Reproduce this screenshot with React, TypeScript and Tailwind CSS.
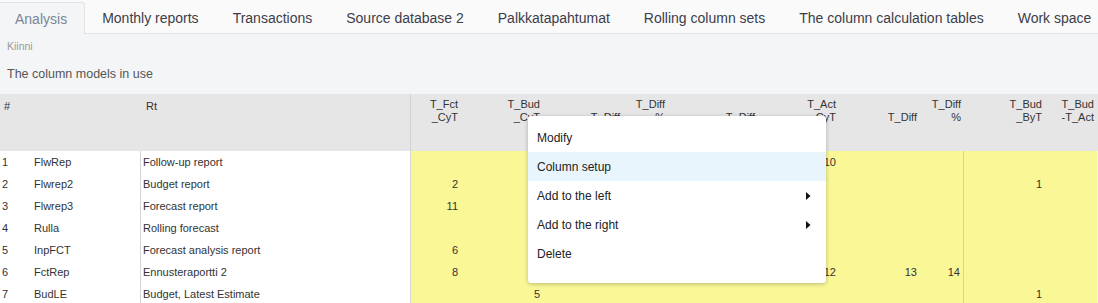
import React from "react";

const tabs = [
  "Analysis",
  "Monthly reports",
  "Transactions",
  "Source database 2",
  "Palkkatapahtumat",
  "Rolling column sets",
  "The column calculation tables",
  "Work space",
];

interface Col {
  w: string;
  l1: string;
  l2: string;
  border?: boolean;
}

const cols: Col[] = [
  { w: "w-[50px]", l1: "T_Fct", l2: "_CyT" },
  { w: "w-[82px]", l1: "T_Bud", l2: "_CyT" },
  { w: "w-[80px]", l1: "", l2: "T_Diff" },
  { w: "w-[45px]", l1: "T_Diff", l2: "%" },
  { w: "w-[90px]", l1: "", l2: "T_Diff" },
  { w: "w-[81px]", l1: "T_Act", l2: "_CyT" },
  { w: "w-[81px]", l1: "", l2: "T_Diff" },
  { w: "w-[44px]", l1: "T_Diff", l2: "%", border: true },
  { w: "w-[81px]", l1: "T_Bud", l2: "_ByT" },
  { w: "w-[52px]", l1: "T_Bud", l2: "-T_Act" },
];

const rows = [
  { n: 1, code: "FlwRep", rt: "Follow-up report", v: { 5: "10" } },
  { n: 2, code: "Flwrep2", rt: "Budget report", v: { 0: "2", 8: "1" } },
  { n: 3, code: "Flwrep3", rt: "Forecast report", v: { 0: "11" } },
  { n: 4, code: "Rulla", rt: "Rolling forecast", v: {} },
  { n: 5, code: "InpFCT", rt: "Forecast analysis report", v: { 0: "6" } },
  { n: 6, code: "FctRep", rt: "Ennusteraportti 2", v: { 0: "8", 5: "12", 6: "13", 7: "14" } },
  { n: 7, code: "BudLE", rt: "Budget, Latest Estimate", v: { 1: "5", 8: "1" } },
] as { n: number; code: string; rt: string; v: Record<number, string> }[];

const menuItems = [
  { label: "Modify" },
  { label: "Column setup", active: true },
  { label: "Add to the left", sub: true },
  { label: "Add to the right", sub: true },
  { label: "Delete" },
];

export default function App() {
  return (
    <div
      className="relative w-[1098px] h-[303px] overflow-hidden bg-[#f4f5f7] text-[#333]"
      style={{ fontFamily: '"Liberation Sans", Arial, sans-serif' }}
    >
      {/* Tabs */}
      <div className="flex h-[34px] items-end border-b border-[#e2e2e2] bg-[#fafafa]">
        {tabs.map((t, i) => (
          <div
            key={t}
            className={
              i === 0
                ? "h-[32px] -mb-px flex items-center pt-[2px] pl-[15px] pr-[17px] bg-[#f4f5f7] border-t border-r border-[#e2e2e2] rounded-tr-[3px] text-[14px] text-[#7b8595] whitespace-nowrap shrink-0"
                : "h-[32px] flex items-center pt-[2px] px-[17px] text-[14px] text-[#3d3d4b] whitespace-nowrap shrink-0"
            }
          >
            {t}
          </div>
        ))}
      </div>

      {/* Header texts */}
      <div className="px-[7px] pt-[5px] text-[10.5px] text-[#9a9a9a]">Kiinni</div>
      <div className="px-[7px] pt-[10px] text-[12.5px] text-[#555]">The column models in use</div>

      {/* Table */}
      <div className="mt-[10px] text-[11px]">
        <div className="flex h-[57px] bg-[#e6e6e6]">
          <div className="w-[30px] shrink-0 pl-[4px] pt-[4px]">#</div>
          <div className="w-[110px] shrink-0" />
          <div className="w-[271px] shrink-0 pl-[6px] pt-[4px] border-r border-[#d2d2d2]">Rt</div>
          {cols.map((c, i) => (
            <div key={i} className={`${c.w} shrink-0 pr-[3px] pt-[4px] text-right leading-[13px] whitespace-nowrap`}>
              <div className="h-[13px]">{c.l1}</div>
              <div>{c.l2}</div>
            </div>
          ))}
        </div>
        {rows.map((r) => (
          <div key={r.n} className="flex h-[22px]">
            <div className="w-[30px] shrink-0 pl-[2px] pt-[3px] bg-white">{r.n}</div>
            <div className="w-[110px] shrink-0 pl-[4px] pt-[3px] bg-white">{r.code}</div>
            <div className="w-[271px] shrink-0 pl-[2px] pt-[3px] bg-white border-l border-r border-[#d6d6d6]">{r.rt}</div>
            {cols.map((c, i) => (
              <div
                key={i}
                className={`${c.w} shrink-0 pr-[3px] pt-[3px] text-right bg-[#faf797] ${c.border ? "border-r border-[#cfcfcf]" : ""}`}
              >
                {r.v[i] ?? ""}
              </div>
            ))}
          </div>
        ))}
      </div>

      {/* Context menu */}
      <div className="absolute left-[528px] top-[116px] w-[298px] h-[167px] bg-white rounded-[3px] shadow-[0_1px_4px_rgba(0,0,0,0.25)] pt-[7px] text-[12px] text-[#222]">
        {menuItems.map((m) => (
          <div
            key={m.label}
            className={`flex items-center justify-between h-[29px] pl-[9px] pr-[15px] ${m.active ? "bg-[#e9f5fc]" : ""}`}
          >
            <span>{m.label}</span>
            {m.sub && (
              <svg width="5" height="8" viewBox="0 0 5 8">
                <path d="M0 0 L4.5 4 L0 8 Z" fill="#111" />
              </svg>
            )}
          </div>
        ))}
      </div>
    </div>
  );
}
